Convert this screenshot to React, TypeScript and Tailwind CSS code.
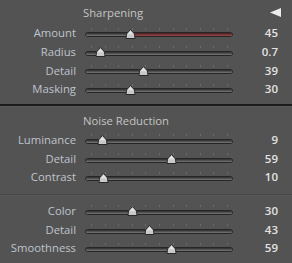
import React from "react";

type Slider = {
  label: string;
  value: string;
  pos: number; // 0..1 along the track
  active?: boolean;
};

const SHARPENING: Slider[] = [
  { label: "Amount", value: "45", pos: 0.3, active: true },
  { label: "Radius", value: "0.7", pos: 0.09 },
  { label: "Detail", value: "39", pos: 0.39 },
  { label: "Masking", value: "30", pos: 0.3 },
];

const LUMINANCE: Slider[] = [
  { label: "Luminance", value: "9", pos: 0.1 },
  { label: "Detail", value: "59", pos: 0.59 },
  { label: "Contrast", value: "10", pos: 0.11 },
];

const COLOR: Slider[] = [
  { label: "Color", value: "30", pos: 0.31 },
  { label: "Detail", value: "43", pos: 0.43 },
  { label: "Smoothness", value: "59", pos: 0.59 },
];

const TICKS = Array.from({ length: 11 }, (_, i) => i);

function Thumb() {
  return (
    <svg width="11" height="10" viewBox="0 0 11 10" className="block">
      <path
        d="M5.5 0.5 L9.5 5 L10 9.5 L1 9.5 L1.5 5 Z"
        fill="#c9c9c9"
        stroke="#2a2a2a"
        strokeWidth="1"
        strokeLinejoin="round"
      />
      <path d="M5.5 1.8 L8.6 5.3 L2.4 5.3 Z" fill="#e4e4e4" />
    </svg>
  );
}

function SliderRow({ label, value, pos, active }: Slider) {
  // track inner span is 88..230 on the page; track box is 85..233
  const thumbX = 3 + pos * 142;
  return (
    <div className="flex items-center h-[18.67px]">
      <div className="w-[76px] text-right text-[11.3px] text-[#bfc3cb] leading-none">
        {label}
      </div>
      <div className="relative ml-[9px] w-[148px] h-full">
        {/* ticks */}
        <div className="absolute left-[6px] right-[5px] top-[4px] flex justify-between">
          {TICKS.map((t) => (
            <div key={t} className="w-px h-[2px] bg-[#6b6b6b]" />
          ))}
        </div>
        {/* track */}
        <div className="absolute left-0 right-0 top-[8.5px] h-[5px] rounded-full bg-[#1f1f1f] border border-[#262626] overflow-hidden">
          <div className="h-full w-full bg-gradient-to-b from-[#2c2c2c] to-[#7a7a7a]" />
          {active && (
            <div
              className="absolute top-0 bottom-0 right-0 bg-gradient-to-b from-[#4a2020] to-[#9a4a4e]"
              style={{ left: thumbX }}
            />
          )}
        </div>
        <div className="absolute top-[5px]" style={{ left: thumbX - 5.5 }}>
          <Thumb />
        </div>
      </div>
      <div className="w-[45px] text-right text-[11.5px] font-semibold text-[#e2e2e2] leading-none">
        {value}
      </div>
    </div>
  );
}

export default function App() {
  return (
    <div
      className="w-[292px] h-[263px] bg-[#535353] overflow-hidden select-none"
      style={{ fontFamily: "'Open Sans', 'Noto Sans', sans-serif" }}
    >
      {/* Sharpening */}
      <div className="relative h-[23.67px] flex items-center pt-[2px] pl-[83px]">
        <span className="text-[11.3px] text-[#c4c4c4] leading-none">Sharpening</span>
        <svg
          width="11"
          height="9"
          viewBox="0 0 11 9"
          className="absolute right-[11px] top-[8px]"
        >
          <path d="M0 4.5 L11 0 L11 9 Z" fill="#ececec" />
        </svg>
      </div>
      {SHARPENING.map((s) => (
        <SliderRow key={s.label} {...s} />
      ))}

      <div className="mt-[5.5px] h-[2px] bg-[#1b1b1b]" />
      <div className="h-px bg-[#5c5c5c]" />

      {/* Noise Reduction */}
      <div className="h-[23.67px] flex items-center pt-[4px] pl-[83px]">
        <span className="text-[11.3px] text-[#c4c4c4] leading-none">Noise Reduction</span>
      </div>
      {LUMINANCE.map((s) => (
        <SliderRow key={s.label} {...s} />
      ))}

      <div className="mt-[8px] h-px bg-[#474747]" />
      <div className="h-px bg-[#5a5a5a]" />
      <div className="h-[5px]" />
      {COLOR.map((s) => (
        <SliderRow key={s.label} {...s} />
      ))}
    </div>
  );
}
